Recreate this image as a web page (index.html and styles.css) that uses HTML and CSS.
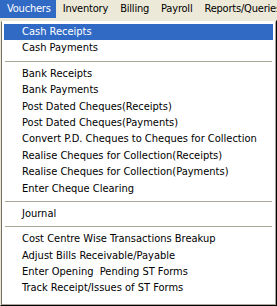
FILE: index.html
```html
<!DOCTYPE html>
<html>
<head>
<meta charset="utf-8">
<link rel="stylesheet" href="styles.css">
</head>
<body>
<div class="menubar">
  <span class="mb-item active">Vouchers</span>
  <span class="mb-item">Inventory</span>
  <span class="mb-item">Billing</span>
  <span class="mb-item">Payroll</span>
  <span class="mb-item">Reports/Queries</span>
</div>
<div class="dropdown">
  <div class="inner">
    <div class="item selected">Cash Receipts</div>
    <div class="item">Cash Payments</div>
    <div class="sep"></div>
    <div class="item">Bank Receipts</div>
    <div class="item">Bank Payments</div>
    <div class="item">Post Dated Cheques(Receipts)</div>
    <div class="item">Post Dated Cheques(Payments)</div>
    <div class="item">Convert P.D. Cheques to Cheques for Collection</div>
    <div class="item">Realise Cheques for Collection(Receipts)</div>
    <div class="item">Realise Cheques for Collection(Payments)</div>
    <div class="item">Enter Cheque Clearing</div>
    <div class="sep"></div>
    <div class="item">Journal</div>
    <div class="sep"></div>
    <div class="item">Cost Centre Wise Transactions Breakup</div>
    <div class="item">Adjust Bills Receivable/Payable</div>
    <div class="item">Enter Opening&nbsp; Pending ST Forms</div>
    <div class="item">Track Receipt/Issues of ST Forms</div>
  </div>
</div>
</body>
</html>
```
FILE: styles.css
```css
html, body {
  margin: 0;
  padding: 0;
  width: 277px;
  height: 306px;
  overflow: hidden;
  background: #ffffff;
}
body {
  font-family: "DejaVu Sans Condensed", "DejaVu Sans", sans-serif;
  font-size: 11px;
  color: #000000;
}
.menubar {
  display: flex;
  height: 20px;
  background: #ece9d8;
  white-space: nowrap;
  overflow: hidden;
}
.mb-item {
  flex: none;
  height: 18px;
  line-height: 18px;
  padding: 0 5px 0 7px;
  letter-spacing: -0.2px;
}
.mb-item.active {
  background: #316ac5;
  color: #ffffff;
}
.dropdown {
  width: 277px;
  height: 286px;
  border-top: 1px solid #ece9d8;
  border-left: 1px solid #ece9d8;
  border-right: 1px solid #000000;
  border-bottom: 1px solid #000000;
  background: #ffffff;
  box-sizing: border-box;
}
.inner {
  height: 100%;
  box-sizing: border-box;
  border-top: 1px solid #ffffff;
  border-left: 1px solid #716f64;
  border-right: 1px solid #aca899;
  border-bottom: 1px solid #aca899;
  padding: 2px 2px 0 2px;
  overflow: hidden;
}
.item {
  height: 16.4px;
  line-height: 16px;
  padding-left: 18px;
  white-space: nowrap;
}
.item.selected {
  background: #316ac5;
  color: #ffffff;
}
.sep {
  height: 1px;
  background: #aca899;
  margin: 4px 1px 4px 1px;
}
```
